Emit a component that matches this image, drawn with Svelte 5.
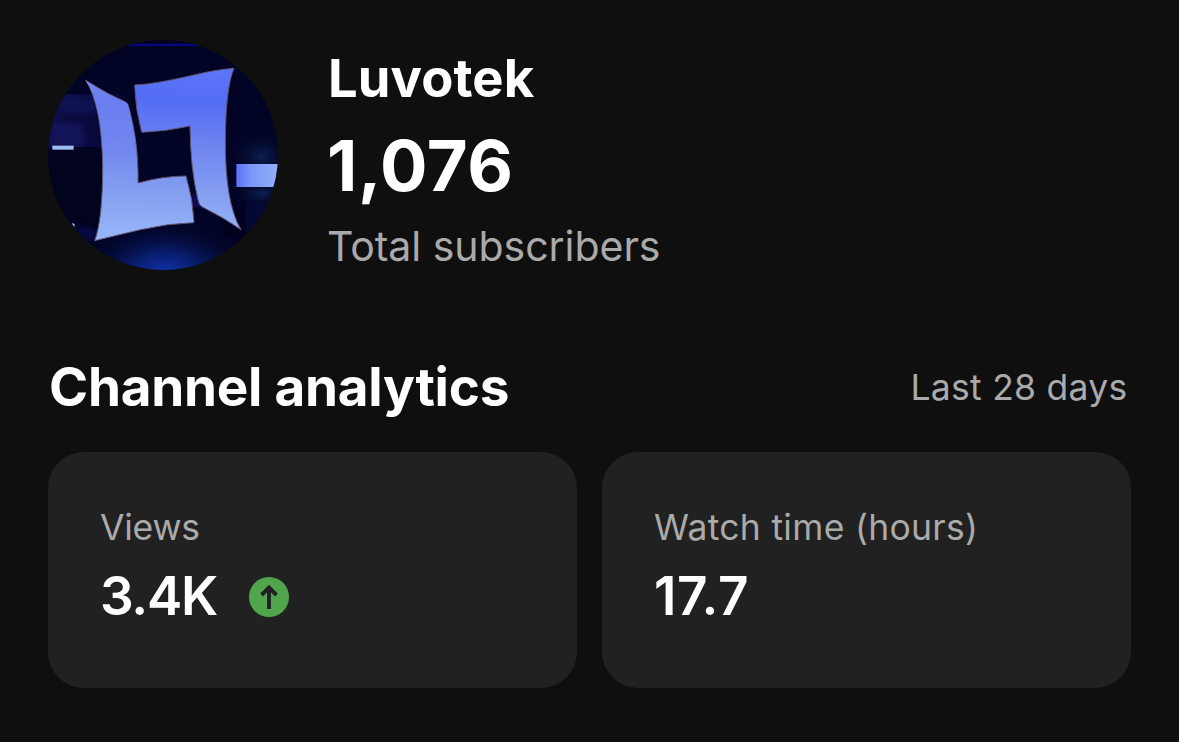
<script>
  const channel = { name: 'Luvotek', subscribers: '1,076' };
  const cards = [
    { label: 'Views', value: '3.4K', up: true, kind: 'views' },
    { label: 'Watch time (hours)', value: '17.7', up: false, kind: 'watch' }
  ];
</script>

<main>
  <header>
    <svg class="avatar" viewBox="24 30 690 690" aria-hidden="true">
      <defs>
        <clipPath id="disc"><circle cx="369" cy="375" r="345" /></clipPath>
        <linearGradient id="mark" x1="375" y1="115" x2="365" y2="635" gradientUnits="userSpaceOnUse">
          <stop offset="0" stop-color="#5e76f6" />
          <stop offset="0.18" stop-color="#526cf4" />
          <stop offset="0.42" stop-color="#6c82f0" />
          <stop offset="0.7" stop-color="#839df0" />
          <stop offset="1" stop-color="#98b8f9" />
        </linearGradient>
        <linearGradient id="leftTint" x1="0" y1="150" x2="0" y2="410" gradientUnits="userSpaceOnUse">
          <stop offset="0" stop-color="#8290ec" stop-opacity="0.9" />
          <stop offset="0.6" stop-color="#7888ee" stop-opacity="0.6" />
          <stop offset="1" stop-color="#7488f0" stop-opacity="0" />
        </linearGradient>
        <radialGradient id="floor" cx="375" cy="735" r="270" gradientTransform="translate(0 260) scale(1 .65)" gradientUnits="userSpaceOnUse">
          <stop offset="0" stop-color="#1338b4" />
          <stop offset="0.4" stop-color="#0a2380" stop-opacity="0.8" />
          <stop offset="1" stop-color="#020424" stop-opacity="0" />
        </radialGradient>
        <radialGradient id="glow">
          <stop offset="0" stop-color="#0e2a60" stop-opacity="0.75" />
          <stop offset="1" stop-color="#020424" stop-opacity="0" />
        </radialGradient>
        <linearGradient id="bands" x1="24" y1="0" x2="250" y2="0" gradientUnits="userSpaceOnUse">
          <stop offset="0" stop-color="#15165c" />
          <stop offset="0.55" stop-color="#0c0d48" />
          <stop offset="1" stop-color="#080838" />
        </linearGradient>
        <linearGradient id="bar" x1="589" y1="0" x2="714" y2="0" gradientUnits="userSpaceOnUse">
          <stop offset="0" stop-color="#5b70fa" />
          <stop offset="0.35" stop-color="#7b98f8" />
          <stop offset="1" stop-color="#91aefa" />
        </linearGradient>
        <filter id="soft" x="-30%" y="-50%" width="160%" height="200%" color-interpolation-filters="sRGB"><feGaussianBlur stdDeviation="8" /></filter>
      </defs>
      <g clip-path="url(#disc)">
        <rect x="24" y="30" width="690" height="690" fill="#020426" />
        <rect x="24" y="30" width="690" height="10" fill="#02021b" />
        <rect x="24" y="41" width="690" height="7" fill="#080680" />
        <rect x="24" y="192" width="226" height="160" fill="url(#bands)" opacity="0.75" />
        <g filter="url(#soft)">
          <rect x="70" y="204" width="100" height="44" fill="#131458" opacity="0.7" />
          <rect x="54" y="258" width="120" height="10" fill="#070630" opacity="0.8" />
          <rect x="40" y="284" width="90" height="62" fill="#161660" opacity="0.8" />
          <rect x="120" y="296" width="70" height="8" fill="#070630" opacity="0.8" />
        </g>
        <rect x="24" y="352" width="160" height="250" fill="#02031f" />
        <ellipse cx="665" cy="380" rx="100" ry="80" fill="url(#glow)" />
        <ellipse cx="665" cy="490" rx="90" ry="50" fill="url(#glow)" />
        <rect x="552" y="532" width="65" height="90" fill="#02021f" />
        <rect x="617" y="520" width="97" height="100" fill="#070b3c" opacity="0.6" />
        <ellipse cx="120" cy="612" rx="50" ry="24" fill="#0b1262" opacity="0.45" filter="url(#soft)" />
        <rect x="24" y="490" width="690" height="230" fill="url(#floor)" />
        <rect x="457" y="490" width="22" height="42" fill="#0f0952" />
        <rect x="37" y="347" width="64" height="12" fill="#9fbff0" />
        <path d="M95 580 L103 581 L104 592 Z" fill="#b2d7ee" />
        <rect x="589" y="402" width="125" height="69" fill="url(#bar)" />
        <g fill="url(#mark)" stroke="#63536f" stroke-width="3">
          <path d="M137 151 Q200 192 258 217 Q264 220 268 238 Q290 322 293 400 Q295 430 294 459 Q370 438 438 438 Q459 505 462 578 Q385 580 302 599 Q230 616 164 632 Q188 568 188 410 Q186 225 137 151 Z" />
          <path d="M284 165 Q340 163 445 139 Q530 118 582 115 Q557 174 556 330 Q555 520 603 599 Q550 562 487 531 Q477 526 474 510 Q451 415 450 288 Q380 304 305 307 Q286 237 284 165 Z" />
        </g>
        <path d="M137 151 Q200 192 258 217 Q264 220 268 238 Q290 322 293 400 L188 410 Q186 225 137 151 Z" fill="url(#leftTint)" opacity="0.7" />
      </g>
    </svg>
    <div class="identity">
      <h1>{channel.name}</h1>
      <div class="count">{channel.subscribers}</div>
      <div class="caption">Total subscribers</div>
    </div>
  </header>

  <div class="section-head">
    <h2>Channel analytics</h2>
    <span>Last 28 days</span>
  </div>

  <section>
    {#each cards as card}
      <article class={card.kind}>
        <div class="label">{card.label}</div>
        <div class="row">
          <span class="value">{card.value}</span>
          {#if card.up}
            <svg class="trend" viewBox="0 0 40 40" aria-hidden="true">
              <circle cx="20" cy="20" r="20" fill="#51a54c" />
              <path d="M20 32 V10.6 M12.6 18 L20 10.6 L27.4 18" fill="none" stroke="#212121" stroke-width="3.9" />
            </svg>
          {/if}
        </div>
      </article>
    {/each}
  </section>
</main>

<style>
  :global(body) { background: #0f0f0f; }
  main {
    box-sizing: border-box;
    width: 1179px;
    height: 742px;
    padding: 40px 48px 54px;
    background: #0f0f0f;
    color: #fff;
    font-family: Inter, sans-serif;
    white-space: nowrap;
  }
  header { display: flex; height: 230px; gap: 49px; }
  .avatar { width: 230px; height: 230px; flex: none; }
  .identity { padding-top: 6px; }
  h1, h2 { margin: 0; font-weight: 700; }
  h1 { padding-left: 1px; font-size: 52.5px; line-height: 64px; letter-spacing: 0.1px; }
  .count { margin-top: 16px; font-size: 70.5px; line-height: 80px; font-weight: 700; letter-spacing: 0.6px; }
  .caption { margin-top: 15px; font-size: 41px; line-height: 50px; color: #aaa; letter-spacing: -0.04px; }
  .section-head {
    display: flex;
    justify-content: space-between;
    align-items: baseline;
    height: 64px;
    margin-top: 85px;
    padding: 0 3.5px 0 1px;
  }
  h2 { font-size: 53px; line-height: 64px; letter-spacing: -0.25px; }
  .section-head span { position: relative; top: -6px; font-size: 35.5px; letter-spacing: 0.27px; color: #aaa; }
  section { display: grid; grid-template-columns: 529px 529px; gap: 25px; margin-top: 33px; }
  article { box-sizing: border-box; height: 236px; padding: 53px 52px; border-radius: 36px; background: #212121; }
  .label { font-size: 35.5px; line-height: 46px; color: #aaa; letter-spacing: 0.3px; }
  .row { display: flex; align-items: center; height: 64px; margin-top: 13px; }
  .value { font-size: 53px; line-height: 64px; font-weight: 600; letter-spacing: 0.6px; }
  .views .label { letter-spacing: -0.25px; }
  .views .value { width: 149px; letter-spacing: -1.3px; }
  .trend { width: 40px; height: 40px; margin-top: 2px; }
</style>
